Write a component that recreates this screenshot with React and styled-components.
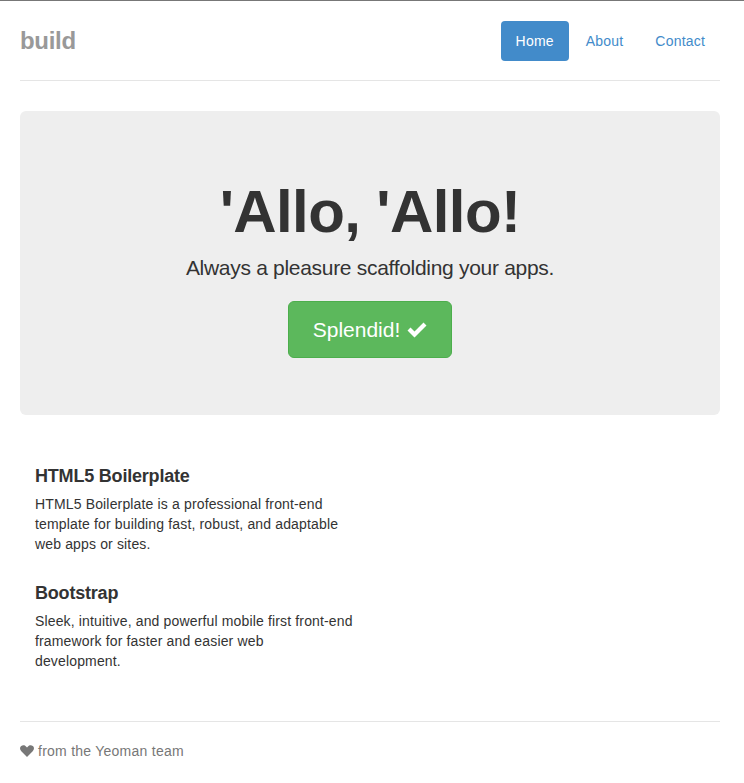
import React from "react";
import styled, { createGlobalStyle } from "styled-components";

const GlobalStyle = createGlobalStyle`
  html, body {
    margin: 0;
    padding: 0;
    background: #fff;
  }
  body {
    font-family: "Liberation Sans", Arial, Helvetica, sans-serif;
    font-size: 14px;
    line-height: 20px;
    color: #333;
    border-top: 1px solid #777;
  }
  * { box-sizing: border-box; }
`;

const Container = styled.div`
  width: 740px;
  padding: 20px 20px 0;
`;

const Header = styled.header`
  display: flex;
  justify-content: space-between;
  align-items: center;
  padding-bottom: 19px;
  border-bottom: 1px solid #e5e5e5;
`;

const Brand = styled.h3`
  margin: 0;
  font-size: 24px;
  font-weight: bold;
  line-height: 40px;
  color: #999;
  letter-spacing: -0.3px;
`;

const Nav = styled.nav`
  display: flex;
  gap: 2px;
`;

const NavLink = styled.a`
  display: block;
  padding: 10px 15px;
  font-size: 14px;
  line-height: 20px;
  letter-spacing: 0.2px;
  border-radius: 4px;
  text-decoration: none;
  color: ${(p) => (p.$active ? "#fff" : "#428bca")};
  background: ${(p) => (p.$active ? "#428bca" : "transparent")};
`;

const Jumbotron = styled.section`
  margin-top: 30px;
  background: #eee;
  border-radius: 6px;
  text-align: center;
  padding: 49px 60px 57px;
  display: flex;
  flex-direction: column;
  align-items: center;
`;

const Title = styled.h1`
  margin: 19px 0 0;
  font-size: 60px;
  line-height: 66px;
  font-weight: bold;
  letter-spacing: -0.6px;
  color: #333;
`;

const Lead = styled.p`
  margin: 8px 0 18px;
  font-size: 21px;
  line-height: 30px;
  font-weight: normal;
  letter-spacing: -0.3px;
  color: #333;
`;

const BigButton = styled.a`
  display: inline-flex;
  align-items: center;
  gap: 7px;
  padding: 14px 24px;
  font-size: 21px;
  line-height: 27px;
  color: #fff;
  background: #5cb85c;
  border: 1px solid #4cae4c;
  border-radius: 6px;
  text-decoration: none;
`;

const Marketing = styled.div`
  margin: 51px 0 50px;
  padding: 0 15px;
`;

const Feature = styled.div`
  width: 318px;
  & + & {
    margin-top: 29px;
  }
`;

const FeatureTitle = styled.h4`
  margin: 0 0 8px;
  font-size: 18px;
  line-height: 20px;
  font-weight: bold;
  letter-spacing: -0.2px;
  color: #333;
`;

const FeatureText = styled.p`
  margin: 0;
  font-size: 14px;
  line-height: 20px;
  letter-spacing: 0.15px;
  color: #333;
`;

const Footer = styled.footer`
  border-top: 1px solid #e5e5e5;
  padding-top: 19px;
  padding-bottom: 20px;
  display: flex;
  align-items: center;
  gap: 4px;
  color: #777;
  font-size: 14px;
  line-height: 20px;
  letter-spacing: 0.25px;
`;

const CheckIcon = () => (
  <svg width="20" height="16" viewBox="0 0 20 16" aria-hidden="true">
    <path d="M0.5 8.5 L3.5 5.5 L7.5 9.5 L16.5 0.5 L19.5 3.5 L7.5 15.5 Z" fill="#fff" />
  </svg>
);

const HeartIcon = () => (
  <svg width="14" height="12" viewBox="0 0 14 12" aria-hidden="true">
    <path
      d="M7 12 L1.3 6.3 C-0.4 4.6 -0.4 2 1.2 0.9 C2.8 -0.3 5 0.1 6 1.4 L7 2.5 L8 1.4 C9 0.1 11.2 -0.3 12.8 0.9 C14.4 2 14.4 4.6 12.7 6.3 Z"
      fill="#777"
    />
  </svg>
);

export default function App() {
  return (
    <>
      <GlobalStyle />
      <Container>
        <Header>
          <Brand>build</Brand>
          <Nav>
            <NavLink href="#" $active>Home</NavLink>
            <NavLink href="#">About</NavLink>
            <NavLink href="#">Contact</NavLink>
          </Nav>
        </Header>

        <Jumbotron>
          <Title>'Allo, 'Allo!</Title>
          <Lead>Always a pleasure scaffolding your apps.</Lead>
          <BigButton href="#">
            Splendid! <CheckIcon />
          </BigButton>
        </Jumbotron>

        <Marketing>
          <Feature>
            <FeatureTitle>HTML5 Boilerplate</FeatureTitle>
            <FeatureText>
              HTML5 Boilerplate is a professional front-end template for building fast, robust, and adaptable web apps or sites.
            </FeatureText>
          </Feature>
          <Feature>
            <FeatureTitle>Bootstrap</FeatureTitle>
            <FeatureText>
              Sleek, intuitive, and powerful mobile first front-end framework for faster and easier web development.
            </FeatureText>
          </Feature>
        </Marketing>

        <Footer>
          <HeartIcon />
          <span>from the Yeoman team</span>
        </Footer>
      </Container>
    </>
  );
}
